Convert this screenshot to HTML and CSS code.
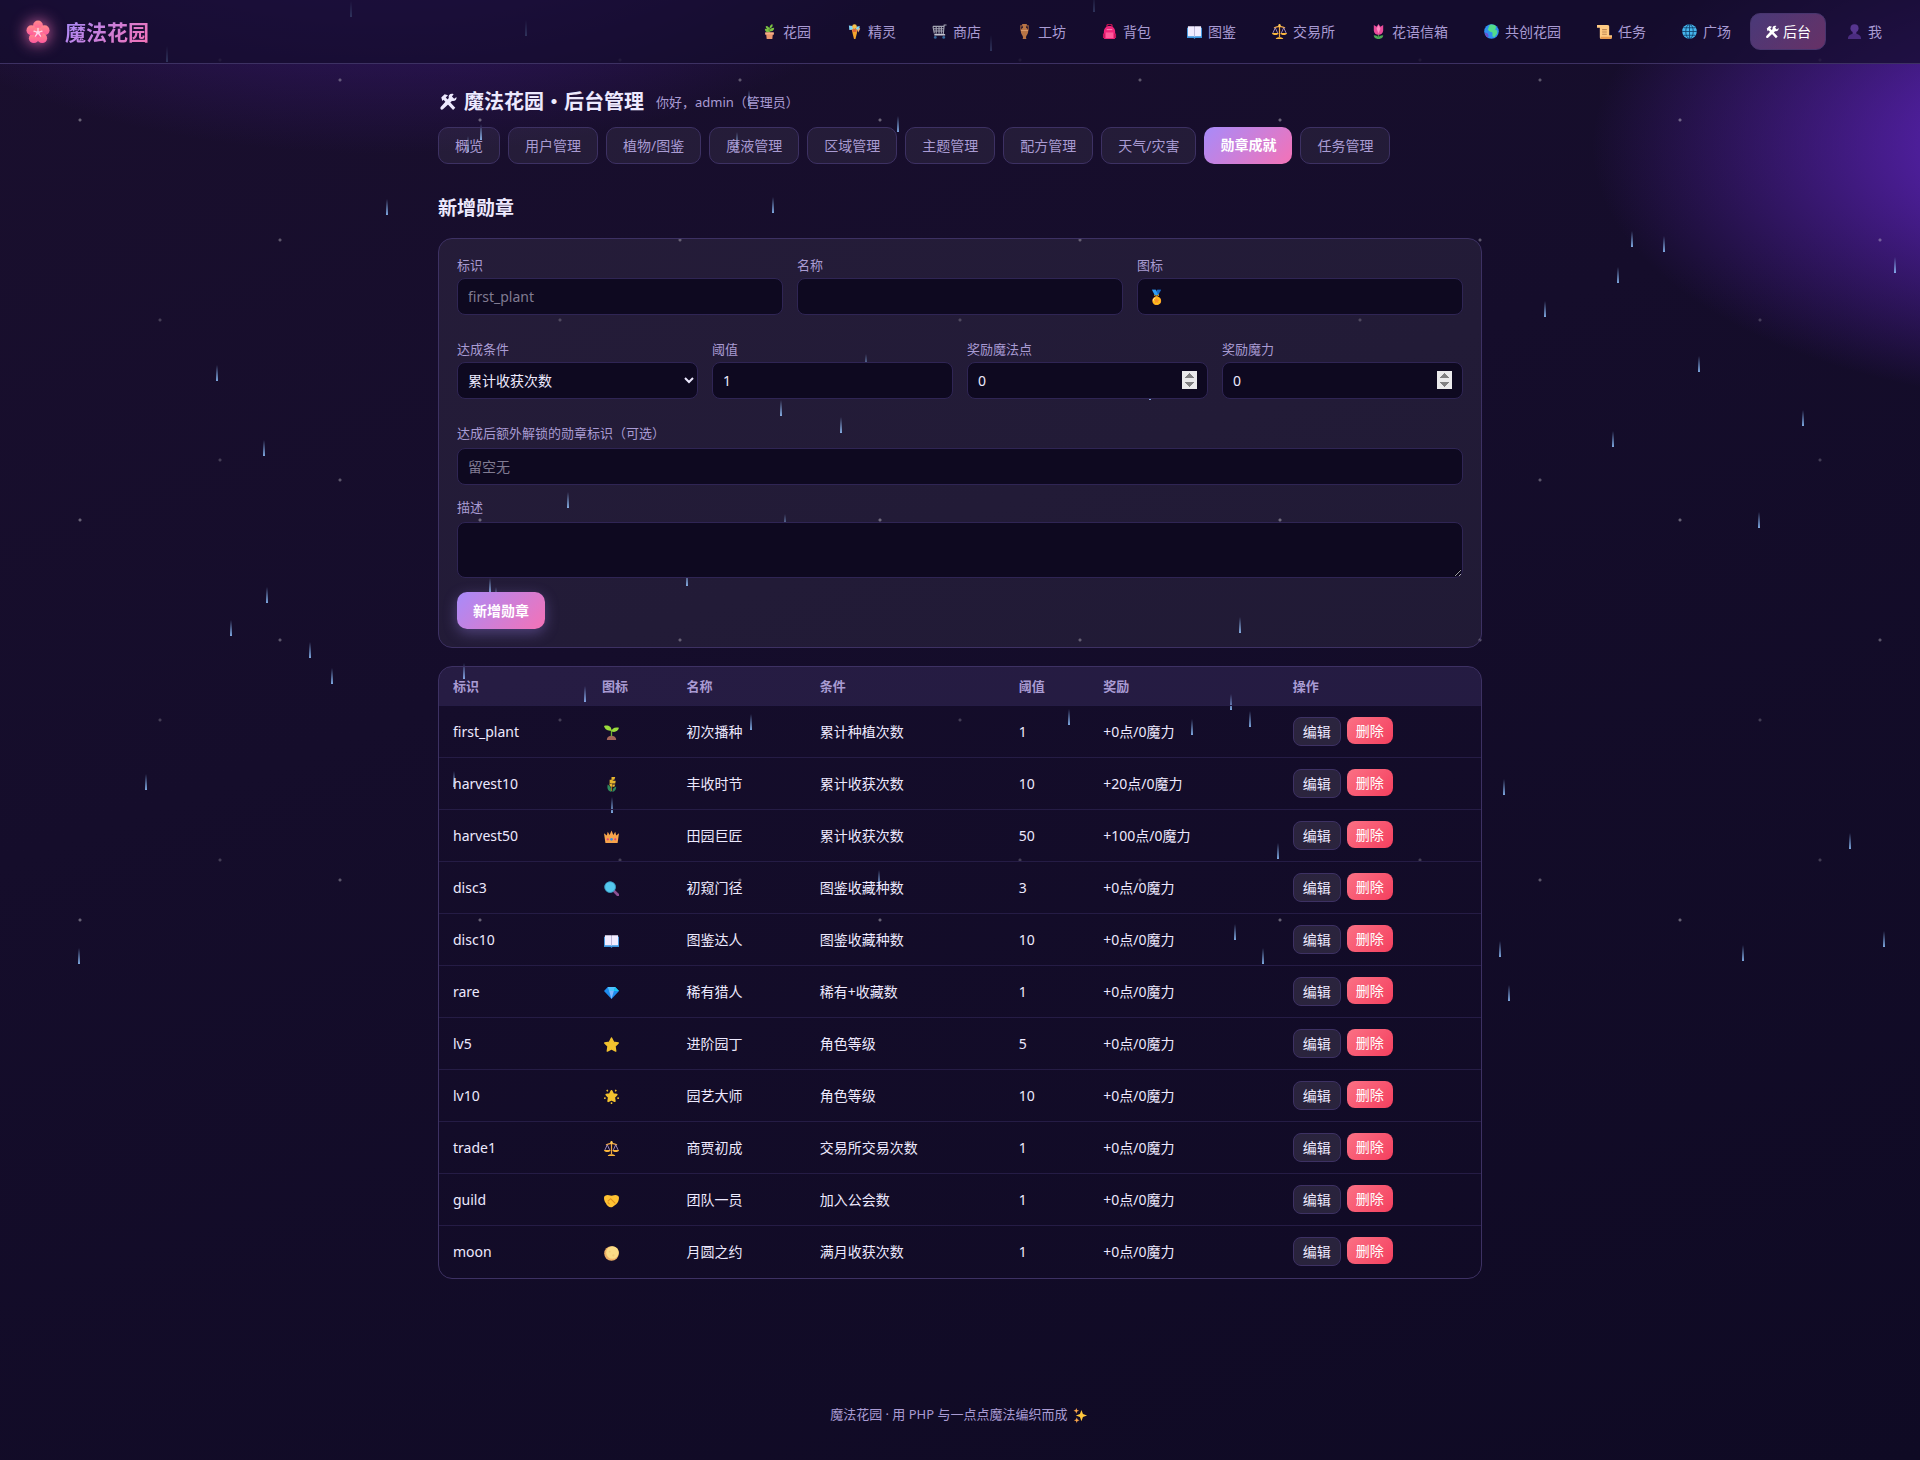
FILE: index.html
```html
<!DOCTYPE html>
<html lang="zh-CN">
<head>
  <meta charset="UTF-8">
  <meta name="viewport" content="width=device-width, initial-scale=1.0">
  <title>勋章成就 - 魔法花园后台</title>
  <link rel="stylesheet" href="styles.css">
</head>
<body>

  <!-- 图标 -->
  <svg class="sprite" aria-hidden="true">
    <defs>
      <linearGradient id="dropFill" x1="0" y1="0" x2="0" y2="1">
        <stop offset="0" stop-color="#8fc2ff" stop-opacity="0"/>
        <stop offset="1" stop-color="#8fc2ff" stop-opacity=".85"/>
      </linearGradient>
      <linearGradient id="petalFill" x1="0" y1="0" x2="0" y2="1">
        <stop offset="0" stop-color="#ff8a8a"/>
        <stop offset="1" stop-color="#ff5a9e"/>
      </linearGradient>
      <rect id="drop" width="2" height="16" fill="url(#dropFill)"/>
    </defs>
    <symbol id="i-blossom" viewBox="0 0 24 24">
      <g fill="url(#petalFill)">
        <circle cx="12" cy="5.4" r="4.9"/><circle cx="18.6" cy="10.2" r="4.9"/><circle cx="16.2" cy="18.2" r="4.9"/>
        <circle cx="7.8" cy="18.2" r="4.9"/><circle cx="5.4" cy="10.2" r="4.9"/><circle cx="12" cy="12.5" r="5"/>
      </g>
      <path d="M12 12.5V8.3M12 12.5l4-1.3M12 12.5l2.6 3.6M12 12.5l-2.6 3.6M12 12.5l-4-1.3" stroke="#ffd6ea" stroke-width="1.3" stroke-linecap="round"/>
      <circle cx="12" cy="12.5" r="1.8" fill="#ffd6ea"/>
    </symbol>
    <symbol id="i-pot" viewBox="0 0 16 16">
      <path d="M8 10V4" stroke="#4d8a2b" stroke-width="1.2"/>
      <path d="M8 6C5 6 4 4 4 2c3 0 4 2 4 4zM8 5c0-3 1-4 3-5 1 2 0 4-3 5zM8 9C5 9 3 8 3 5c3 0 5 1 5 4zM8 8c0-3 2-4 5-4 0 3-2 4-5 4z" fill="#7ac142"/>
      <path d="M3.5 9h9v2.5h-1L11 16H5l-.5-4.5h-1z" fill="#e8956d"/><path d="M3.5 9h9v2h-9z" fill="#f5ad88"/>
    </symbol>
    <symbol id="i-fairy" viewBox="0 0 16 16">
      <path d="M7.500 6L2.500 6.500 2 1.500 6 2zM9 6l4 1 .5-5L10 3z" fill="#7fd3f7"/>
      <circle cx="8" cy="2.800" r="2.500" fill="#f7c04a"/>
      <path d="M5 5.500h6L10.500 10 9 16H7.500L6 10z" fill="#f4a52c"/><path d="M6 5.500h4v3H6z" fill="#e0653c"/>
      <path d="M11 7l2.500-3 .5 1-2 4z" fill="#f6b26b"/>
    </symbol>
    <symbol id="i-cart" viewBox="0 0 16 16">
      <path d="M15.500 1H13l-1 10H3M1 2.500h11.500M1.500 5h11M2 7.500h10M1 2.500L2.500 10M4.500 2.500V10M7.500 2.500V10M10 2.500V10" fill="none" stroke="#a3a4b2" stroke-width="1.200"/>
      <path d="M2.500 11.500H14" stroke="#c8c8d4" stroke-width="1.500"/><circle cx="3.500" cy="14.300" r="1.500" fill="#35689b"/><circle cx="12.500" cy="14.300" r="1.500" fill="#35689b"/>
    </symbol>
    <symbol id="i-vase" viewBox="0 0 16 16">
      <path d="M6 2H4v5M10 2h2v5" fill="none" stroke="#9c5f3c" stroke-width="1.1"/>
      <path d="M5.500 0h5v1.500L9.500 3c0 1.500 2.500 2 2.500 4.500 0 3-2 4.500-2.500 6.500l.5 2H6l.5-2C6 12 4 10.500 4 7.500 4 5 6.500 4.500 6.500 3l-1-1.500z" fill="#b87445"/>
      <path d="M4.200 7h7.600" stroke="#e0a070"/>
    </symbol>
    <symbol id="i-bag" viewBox="0 0 16 16">
      <path d="M5 3c0-4 6-4 6 0" fill="none" stroke="#b3134f" stroke-width="1.4"/>
      <path d="M2 8c0-4 3-6 6-6s6 2 6 6v7a1 1 0 0 1-1 1H3a1 1 0 0 1-1-1z" fill="#f0257a"/>
      <path d="M4 9h8v6H4z" fill="#ff5a9b"/><path d="M1 10h2v5H1zM13 10h2v5h-2z" fill="#c4155d"/><path d="M5 6h6" stroke="#ff8fbd"/>
    </symbol>
    <symbol id="i-book" viewBox="0 0 16 16">
      <path d="M0 4h16v11H9l-1 1-1-1H0z" fill="#3b94dc"/><path d="M1 2.500h6.500L8 3l.5-.5H15V13H8.500l-.5.5-.5-.5H1z" fill="#f1ecff"/><path d="M8 3v10" stroke="#b9b3d6"/>
    </symbol>
    <symbol id="i-scale" viewBox="0 0 16 16">
      <path d="M8 0v14M2 4c2 0 3-1.500 6-1.500S12 4 14 4" fill="none" stroke="#f0a742" stroke-width="1.300"/>
      <path d="M3.500 4L1 9.500M3.500 4L6 9.500M12.500 4L10 9.500M12.500 4L15 9.500" stroke="#b39bd0" stroke-width=".9"/>
      <path d="M0 9.500h7c0 3-7 3-7 0zM9 9.500h7c0 3-7 3-7 0zM4 16c0-2.500 8-2.500 8 0z" fill="#f9b63c"/><circle cx="8" cy="1.500" r="1.300" fill="#ffcf5a"/>
    </symbol>
    <symbol id="i-tulip" viewBox="0 0 16 16">
      <path d="M8 8v8" stroke="#3d9447" stroke-width="1.500"/><path d="M8 16c-2 0-5-1-5-4 3 0 5 1 5 4 0-3 2-4 5-4 0 3-3 4-5 4z" fill="#4caa55"/>
      <path d="M3 1l3 2 2-3 2 3 3-2v6c0 6-10 6-10 0z" fill="#ea4b9b"/><path d="M8 1l2 4-2 5-2-5z" fill="#ff8cc2"/>
    </symbol>
    <symbol id="i-earth" viewBox="0 0 16 16">
      <circle cx="8" cy="8" r="7.800" fill="#2f8ff0"/><path d="M6 1c3-1 6 0 7 2l-1 3 2 1v3l-3 4-2-1V9L6 8 4 6z" fill="#52dd8b"/><path d="M1 9l3 1 1 3-1 1.500C2 13 1 11 1 9z" fill="#6a4fd0"/>
    </symbol>
    <symbol id="i-scroll" viewBox="0 0 16 16">
      <path d="M0 1h11c2 0 2 1 2 2v9h3v2c0 1-1 2-2 2H5c-1.500 0-2-1-2-2V4H0z" fill="#ffcb84"/>
      <path d="M5.500 6h5M5.500 8.500h5M5.500 11h5" stroke="#c08650" stroke-width="1.100"/><path d="M4 13.500h12V14c0 1-1 2-2 2H5c-1 0-1.500-1-1-2.500z" fill="#e89c50"/>
    </symbol>
    <symbol id="i-globe" viewBox="0 0 16 16">
      <circle cx="8" cy="8" r="7.800" fill="#45b5ec"/><g fill="none" stroke="#12426e" stroke-width=".9"><ellipse cx="8" cy="8" rx="4" ry="7.500"/><path d="M8 0v16M0 8h16M2 4h12M2 12h12"/></g>
    </symbol>
    <symbol id="i-tools" viewBox="0 0 16 16">
      <path d="M2 4l3-3 3 1-2 2 8.500 9-2 2L4 6 3 7z" fill="currentColor"/>
      <path d="M15.500 3.500L13.500 5 11.500 3 13 1c-3-1-5 1-4.300 3.500L1.500 12.500c-1 2 1 3 2 2l8-7.500c2.500.7 4.500-1 4-3.500z" fill="currentColor"/>
    </symbol>
    <symbol id="i-user" viewBox="0 0 16 16">
      <circle cx="8" cy="4.500" r="4.300" fill="#56358f"/><path d="M6 8h4v3H6z" fill="#56358f"/><path d="M1 16c0-4 3-5.500 7-5.500s7 1.500 7 5.500z" fill="#4a2c80"/>
    </symbol>
    <symbol id="i-sprout" viewBox="0 0 16 16">
      <path d="M3 16c0-6 10-6 10 0z" fill="#a5665a"/><path d="M8 12V5" stroke="#6fae33" stroke-width="1.400"/>
      <path d="M8 6C4 6 1 5 0 1c4-1 8 0 8 5zM8 7c0-3 3-5 8-4-1 4-4 5-8 4z" fill="#9bdc3c"/>
    </symbol>
    <symbol id="i-rice" viewBox="0 0 16 16">
      <path d="M8 16c-4-1-5-4-4-8 3 2 4 4 4 8zM9 16c0-3 1-5 4-6 0 3-1 5-4 6z" fill="#2f8a5b"/>
      <path d="M8 15c0-5 0-8 1.500-12" fill="none" stroke="#a07a22" stroke-width="1.200"/>
      <path d="M8 0h4l-1 3H8zM6 3h3v3.500H6zM9 4h3.500L12 7H9zM5.500 7h3v3h-2zM9 8h3l-1 2.500H9z" fill="#e7b52e"/>
    </symbol>
    <symbol id="i-crown" viewBox="0 0 16 16">
      <path d="M0 4.500L3 7l1-4 2 3.500L8 1.500l2 5L12 3l1 4 3-2.500L14.500 15h-13z" fill="#f7a34b"/><circle cx="8" cy="11" r="1.400" fill="#3c8ae0"/><circle cx="4" cy="11" r="1.200" fill="#e6447c"/><circle cx="12" cy="11" r="1.200" fill="#e6447c"/>
    </symbol>
    <symbol id="i-lens" viewBox="0 0 16 16">
      <path d="M10 10l5 5" stroke="#8d4f92" stroke-width="3" stroke-linecap="round"/><circle cx="6.500" cy="6.500" r="6" fill="#55c8ee"/><circle cx="6.500" cy="6.500" r="5.700" fill="none" stroke="#3595bd" stroke-width=".8"/>
    </symbol>
    <symbol id="i-gem" viewBox="0 0 16 16">
      <path d="M4 2h8l4 4.500L8 15 0 6.500z" fill="#1e8df0"/><path d="M4 2h8l-1.500 4.500h-5z" fill="#4fc3ff"/><path d="M5.500 6.500h5L8 15z" fill="#7fb8ff"/><path d="M12 2l4 4.500h-5.500z" fill="#19c8f0"/>
    </symbol>
    <symbol id="i-star" viewBox="0 0 16 16">
      <path d="M8 1l2.200 4.500 5 .8-3.500 3.500.8 5.200L8 12.700 3.500 15l.8-5.200L.8 6.300l5-.8z" fill="#f2c22f" stroke="#f2c22f" stroke-width="1.500" stroke-linejoin="round"/>
    </symbol>
    <symbol id="i-glow" viewBox="0 0 16 16">
      <path d="M8 2l1.800 3.500 3.700.6-2.700 2.800.7 4L8 11.300 4.500 13l.7-4.100-2.700-2.800 3.700-.6z" fill="#f2c22f" stroke="#f2c22f" stroke-width="2" stroke-linejoin="round"/>
      <path d="M3 1l1 1.500M13 1l-1 1.500M0 10l1.800-.5M16 10l-1.800-.5M8 14v2" stroke="#f2c22f" stroke-width="1.600"/>
    </symbol>
    <symbol id="i-hands" viewBox="0 0 16 16">
      <path d="M0 5c0-2 2-3 4-3l4 1 4-1c2 0 4 1 4 3-.2 3-1 5-3 7l-4 3c-3 1-6-1-7-4C.5 9 0 7 0 5z" fill="#ffc233"/><path d="M4 9l3-3 5 5M6 12l-2-2" fill="none" stroke="#e08e1d" stroke-width="1.100"/>
    </symbol>
    <symbol id="i-moon" viewBox="0 0 16 16">
      <circle cx="8" cy="8" r="7.800" fill="#eeb066"/><circle cx="9" cy="7" r="6.700" fill="#fbdc86"/><circle cx="6" cy="6" r="1" fill="#f3cb78"/><circle cx="10" cy="10" r="1.200" fill="#f3cb78"/>
    </symbol>
    <symbol id="i-spark" viewBox="0 0 16 16">
      <path d="M9 2l1.600 4.400L15 8l-4.400 1.600L9 14l-1.600-4.400L3 8l4.400-1.600z" fill="#ffc83d"/><path d="M3.500 0l.8 2.200 2.200.8-2.200.8-.8 2.200-.8-2.200L.5 3l2.200-.8zM4 10l.8 2.200 2.200.8-2.200.8L4 16l-.8-2.200L1 13l2.200-.8z" fill="#ffa94d"/>
    </symbol>
  </svg>

  <!-- 天气：星星与雨 -->
  <div class="sky" aria-hidden="true">
    <svg class="rain">
      <use href="#drop" x="350" y="1"/><use href="#drop" x="166" y="46"/><use href="#drop" x="525" y="20"/>
      <use href="#drop" x="1093" y="-4"/><use href="#drop" x="990" y="35"/><use href="#drop" x="386" y="199"/>
      <use href="#drop" x="748" y="90"/><use href="#drop" x="897" y="116"/><use href="#drop" x="480" y="124"/>
      <use href="#drop" x="467" y="136"/><use href="#drop" x="736" y="132"/><use href="#drop" x="772" y="197"/>
      <use href="#drop" x="865" y="354"/><use href="#drop" x="780" y="400"/><use href="#drop" x="840" y="417"/>
      <use href="#drop" x="567" y="492"/><use href="#drop" x="784" y="514"/><use href="#drop" x="686" y="570"/>
      <use href="#drop" x="489" y="578"/><use href="#drop" x="495" y="587"/><use href="#drop" x="1149" y="384"/>
      <use href="#drop" x="1239" y="617"/><use href="#drop" x="463" y="663"/><use href="#drop" x="584" y="686"/>
      <use href="#drop" x="750" y="714"/><use href="#drop" x="453" y="771"/><use href="#drop" x="611" y="797"/>
      <use href="#drop" x="878" y="870"/><use href="#drop" x="1068" y="709"/><use href="#drop" x="1230" y="694"/>
      <use href="#drop" x="1191" y="719"/><use href="#drop" x="1249" y="711"/><use href="#drop" x="1277" y="843"/>
      <use href="#drop" x="1234" y="924"/><use href="#drop" x="1262" y="948"/><use href="#drop" x="1631" y="231"/>
      <use href="#drop" x="1663" y="236"/><use href="#drop" x="1617" y="267"/><use href="#drop" x="1544" y="301"/>
      <use href="#drop" x="1894" y="257"/><use href="#drop" x="1698" y="356"/><use href="#drop" x="1802" y="410"/>
      <use href="#drop" x="1612" y="431"/><use href="#drop" x="1758" y="512"/><use href="#drop" x="216" y="365"/>
      <use href="#drop" x="263" y="440"/><use href="#drop" x="266" y="587"/><use href="#drop" x="230" y="620"/>
      <use href="#drop" x="309" y="642"/><use href="#drop" x="331" y="668"/><use href="#drop" x="145" y="774"/>
      <use href="#drop" x="78" y="948"/><use href="#drop" x="1503" y="779"/><use href="#drop" x="1849" y="833"/>
      <use href="#drop" x="1499" y="941"/><use href="#drop" x="1508" y="985"/><use href="#drop" x="1742" y="945"/>
      <use href="#drop" x="1883" y="931"/>
    </svg>
  </div>

  <header class="topbar">
    <a class="brand" href="#">
      <svg class="brand-icon"><use href="#i-blossom"/></svg>
      <span class="brand-name">魔法花园</span>
    </a>
    <nav class="nav">
      <a href="#"><svg class="icon"><use href="#i-pot"/></svg>花园</a>
      <a href="#"><svg class="icon"><use href="#i-fairy"/></svg>精灵</a>
      <a href="#"><svg class="icon"><use href="#i-cart"/></svg>商店</a>
      <a href="#"><svg class="icon"><use href="#i-vase"/></svg>工坊</a>
      <a href="#"><svg class="icon"><use href="#i-bag"/></svg>背包</a>
      <a href="#"><svg class="icon"><use href="#i-book"/></svg>图鉴</a>
      <a href="#"><svg class="icon"><use href="#i-scale"/></svg>交易所</a>
      <a href="#"><svg class="icon"><use href="#i-tulip"/></svg>花语信箱</a>
      <a href="#"><svg class="icon"><use href="#i-earth"/></svg>共创花园</a>
      <a href="#"><svg class="icon"><use href="#i-scroll"/></svg>任务</a>
      <a href="#"><svg class="icon"><use href="#i-globe"/></svg>广场</a>
      <a href="#" class="active"><svg class="icon-mono"><use href="#i-tools"/></svg>后台</a>
      <a href="#"><svg class="icon"><use href="#i-user"/></svg>我</a>
    </nav>
  </header>

  <main class="container">
    <div class="page-head">
      <h1><svg class="head-icon"><use href="#i-tools"/></svg>魔法花园・后台管理</h1>
      <span class="hello">你好，admin（管理员）</span>
    </div>

    <nav class="tabs">
      <a href="#">概览</a>
      <a href="#">用户管理</a>
      <a href="#">植物/图鉴</a>
      <a href="#">魔液管理</a>
      <a href="#">区域管理</a>
      <a href="#">主题管理</a>
      <a href="#">配方管理</a>
      <a href="#">天气/灾害</a>
      <a href="#" class="active">勋章成就</a>
      <a href="#">任务管理</a>
    </nav>

    <h2>新增勋章</h2>
    <form class="card">
      <div class="grid grid-3">
        <div class="field">
          <label for="code">标识</label>
          <input type="text" id="code" placeholder="first_plant">
        </div>
        <div class="field">
          <label for="name">名称</label>
          <input type="text" id="name">
        </div>
        <div class="field">
          <label for="icon">图标</label>
          <input type="text" id="icon" value="🏅">
        </div>
      </div>
      <div class="grid grid-4">
        <div class="field">
          <label for="cond">达成条件</label>
          <select id="cond">
            <option>累计收获次数</option>
            <option>累计种植次数</option>
            <option>图鉴收藏种数</option>
            <option>角色等级</option>
          </select>
        </div>
        <div class="field">
          <label for="threshold">阈值</label>
          <input type="number" id="threshold" value="1">
        </div>
        <div class="field">
          <label for="points">奖励魔法点</label>
          <input type="number" class="spin" id="points" value="0">
        </div>
        <div class="field">
          <label for="mana">奖励魔力</label>
          <input type="number" class="spin" id="mana" value="0">
        </div>
      </div>
      <div class="field wide">
        <label for="unlock">达成后额外解锁的勋章标识（可选）</label>
        <input type="text" id="unlock" placeholder="留空无">
      </div>
      <div class="field wide">
        <label for="desc">描述</label>
        <textarea id="desc"></textarea>
      </div>
      <button type="submit" class="btn">新增勋章</button>
    </form>

    <div class="table-wrap">
      <table>
        <colgroup>
          <col class="c-code"><col class="c-icon"><col class="c-name"><col class="c-cond"><col class="c-num"><col class="c-gift"><col class="c-op">
        </colgroup>
        <thead>
          <tr><th>标识</th><th>图标</th><th>名称</th><th>条件</th><th>阈值</th><th>奖励</th><th>操作</th></tr>
        </thead>
        <tbody>
          <tr>
            <td>first_plant</td><td><svg class="icon"><use href="#i-sprout"/></svg></td><td>初次播种</td><td>累计种植次数</td><td>1</td><td>+0点/0魔力</td>
            <td><div class="ops"><button class="btn-edit">编辑</button><button class="btn-del">删除</button></div></td>
          </tr>
          <tr>
            <td>harvest10</td><td><svg class="icon"><use href="#i-rice"/></svg></td><td>丰收时节</td><td>累计收获次数</td><td>10</td><td>+20点/0魔力</td>
            <td><div class="ops"><button class="btn-edit">编辑</button><button class="btn-del">删除</button></div></td>
          </tr>
          <tr>
            <td>harvest50</td><td><svg class="icon"><use href="#i-crown"/></svg></td><td>田园巨匠</td><td>累计收获次数</td><td>50</td><td>+100点/0魔力</td>
            <td><div class="ops"><button class="btn-edit">编辑</button><button class="btn-del">删除</button></div></td>
          </tr>
          <tr>
            <td>disc3</td><td><svg class="icon"><use href="#i-lens"/></svg></td><td>初窥门径</td><td>图鉴收藏种数</td><td>3</td><td>+0点/0魔力</td>
            <td><div class="ops"><button class="btn-edit">编辑</button><button class="btn-del">删除</button></div></td>
          </tr>
          <tr>
            <td>disc10</td><td><svg class="icon"><use href="#i-book"/></svg></td><td>图鉴达人</td><td>图鉴收藏种数</td><td>10</td><td>+0点/0魔力</td>
            <td><div class="ops"><button class="btn-edit">编辑</button><button class="btn-del">删除</button></div></td>
          </tr>
          <tr>
            <td>rare</td><td><svg class="icon"><use href="#i-gem"/></svg></td><td>稀有猎人</td><td>稀有+收藏数</td><td>1</td><td>+0点/0魔力</td>
            <td><div class="ops"><button class="btn-edit">编辑</button><button class="btn-del">删除</button></div></td>
          </tr>
          <tr>
            <td>lv5</td><td><svg class="icon"><use href="#i-star"/></svg></td><td>进阶园丁</td><td>角色等级</td><td>5</td><td>+0点/0魔力</td>
            <td><div class="ops"><button class="btn-edit">编辑</button><button class="btn-del">删除</button></div></td>
          </tr>
          <tr>
            <td>lv10</td><td><svg class="icon"><use href="#i-glow"/></svg></td><td>园艺大师</td><td>角色等级</td><td>10</td><td>+0点/0魔力</td>
            <td><div class="ops"><button class="btn-edit">编辑</button><button class="btn-del">删除</button></div></td>
          </tr>
          <tr>
            <td>trade1</td><td><svg class="icon"><use href="#i-scale"/></svg></td><td>商贾初成</td><td>交易所交易次数</td><td>1</td><td>+0点/0魔力</td>
            <td><div class="ops"><button class="btn-edit">编辑</button><button class="btn-del">删除</button></div></td>
          </tr>
          <tr>
            <td>guild</td><td><svg class="icon"><use href="#i-hands"/></svg></td><td>团队一员</td><td>加入公会数</td><td>1</td><td>+0点/0魔力</td>
            <td><div class="ops"><button class="btn-edit">编辑</button><button class="btn-del">删除</button></div></td>
          </tr>
          <tr>
            <td>moon</td><td><svg class="icon"><use href="#i-moon"/></svg></td><td>月圆之约</td><td>满月收获次数</td><td>1</td><td>+0点/0魔力</td>
            <td><div class="ops"><button class="btn-edit">编辑</button><button class="btn-del">删除</button></div></td>
          </tr>
        </tbody>
      </table>
    </div>
  </main>

  <footer class="footer">魔法花园 · 用 PHP 与一点点魔法编织而成 <svg class="icon"><use href="#i-spark"/></svg></footer>

</body>
</html>
```
FILE: styles.css
```css
:root {
  --text: #ede9fe;
  --muted: #a99bd3;
  --line: #3d3163;
  --input: #0e0920;
  --grad: linear-gradient(135deg, #a78bfa, #f472b6);
}

* {
  box-sizing: border-box;
}

body {
  margin: 0;
  min-height: 100vh;
  font-family: "Noto Sans", "Noto Sans CJK SC", sans-serif;
  font-size: 14px;
  line-height: 20px;
  color: var(--text);
  background:
    radial-gradient(1200px 600px at 20% -10%, #451c8c, transparent 50%),
    radial-gradient(1000px 500px at 110% 10%, #6d28d9, transparent 52%),
    linear-gradient(160deg, #1a0f2e, #150d2b 40%, #0f0a24);
  background-color: #0f0a24;
}

a {
  color: inherit;
  text-decoration: none;
}

.sprite {
  position: absolute;
  width: 0;
  height: 0;
}

/* 星空和雨滴在内容下面 */
.sky {
  position: absolute;
  top: 0;
  left: 0;
  width: 100%;
  height: 1001px;
  z-index: -1;
  overflow: hidden;
  background-image:
    radial-gradient(circle at 80px 120px, rgba(255, 255, 255, .35) 1px, transparent 2px),
    radial-gradient(circle at 340px 80px, rgba(255, 255, 255, .3) 1px, transparent 2px),
    radial-gradient(circle at 280px 240px, rgba(255, 255, 255, .3) 1px, transparent 2px),
    radial-gradient(circle at 160px 320px, rgba(255, 255, 255, .2) 1px, transparent 2px),
    radial-gradient(circle at 220px 60px, rgba(255, 255, 255, .2) 1px, transparent 2px);
  background-size: 400px 400px;
}

.rain {
  display: block;
  width: 100%;
  height: 100%;
}

.icon {
  width: 15px;
  height: 15px;
  margin: 0 2px;
  flex: none;
  vertical-align: middle;
}

/* 顶部导航 */
.topbar {
  position: sticky;
  top: 0;
  z-index: 10;
  display: flex;
  align-items: center;
  justify-content: space-between;
  padding: 13px 23px 13px 24px;
  background: rgba(20, 12, 45, .75);
  border-bottom: 1px solid var(--line);
}

.brand {
  display: flex;
  align-items: center;
  gap: 13px;
}

.brand-icon {
  width: 28px;
  height: 24px;
  filter: drop-shadow(0 0 8px #f472b6);
}

.brand-name {
  font-size: 21px;
  line-height: 24px;
  font-weight: 700;
  background: var(--grad);
  -webkit-background-clip: text;
  background-clip: text;
  color: transparent;
}

.nav {
  display: flex;
  gap: 4px;
}

.nav a {
  display: flex;
  align-items: center;
  gap: 4px;
  padding: 8px 14px;
  line-height: 19px;
  border: 1px solid transparent;
  border-radius: 10px;
  color: var(--muted);
}

.nav a.active {
  color: #fff;
  border-color: #48356e;
  background: linear-gradient(135deg, rgba(167, 139, 250, .35), rgba(244, 114, 182, .35));
}

.icon-mono {
  width: 14px;
  height: 14px;
}

.container {
  max-width: 1100px;
  margin: 0 auto;
  padding: 24px 28px 90px;
}

.page-head {
  display: flex;
  align-items: center;
  gap: 12px;
  margin-bottom: 11px;
}

h1 {
  display: flex;
  align-items: center;
  gap: 6px;
  margin: 0;
  font-size: 20px;
  line-height: 28px;
}

.head-icon {
  width: 20px;
  height: 18px;
}

.hello {
  font-size: 13px;
  color: var(--muted);
}

.tabs {
  display: flex;
  flex-wrap: wrap;
  gap: 8px;
}

.tabs a {
  padding: 8px 16px;
  line-height: 19px;
  color: var(--muted);
  background: rgba(255, 255, 255, .06);
  border: 1px solid var(--line);
  border-radius: 10px;
}

.tabs a.active {
  color: #fff;
  font-weight: 600;
  background: var(--grad);
  border: none;
}

h2 {
  margin: 30px 0 16px;
  font-size: 19px;
  line-height: 28px;
}

/* 表单 */
.card {
  padding: 18px;
  background: rgba(255, 255, 255, .06);
  border: 1px solid var(--line);
  border-radius: 14px;
}

.grid {
  display: grid;
  gap: 14px;
  margin-bottom: 26px;
}

.grid-3 {
  grid-template-columns: repeat(3, 1fr);
}

.grid-4 {
  grid-template-columns: repeat(4, 1fr);
}

.field {
  display: flex;
  flex-direction: column;
  gap: 5px;
}

.field.wide {
  gap: 7px;
  margin-bottom: 14px;
}

label {
  font-size: 13px;
  line-height: 16px;
  color: var(--muted);
}

input,
select,
textarea {
  width: 100%;
  height: 37px;
  padding: 8px 10px;
  font: inherit;
  color: var(--text);
  background: var(--input);
  border: 1px solid #2f2554;
  border-radius: 8px;
}

::placeholder {
  color: #807b92;
}

select {
  padding: 7px 6px 9px;
}

textarea {
  height: 56px;
}

input.spin::-webkit-inner-spin-button {
  opacity: .93;
}

button {
  font: inherit;
  color: #fff;
  border: none;
  border-radius: 8px;
  cursor: pointer;
}

.btn {
  display: block;
  padding: 8px 16px;
  line-height: 21px;
  font-weight: 700;
  border-radius: 10px;
  background: var(--grad);
  box-shadow: 0 4px 14px rgba(167, 139, 250, .35);
}

/* 勋章列表 */
.table-wrap {
  margin-top: 18px;
  border: 1px solid var(--line);
  border-radius: 14px;
  overflow: hidden;
}

table {
  width: 100%;
  table-layout: fixed;
  border-collapse: collapse;
}

.c-code { width: 14.3%; }
.c-icon { width: 8.1%; }
.c-name { width: 12.8%; }
.c-cond { width: 19.1%; }
.c-num { width: 8.1%; }
.c-gift { width: 18.2%; }
.c-op { width: 19.4%; }

th {
  padding: 10px 14px;
  font-size: 13px;
  line-height: 18px;
  text-align: left;
  color: var(--muted);
  background: rgba(167, 139, 250, .12);
}

td {
  height: 52px;
  padding: 0 14px;
  border-top: 1px solid #251c45;
}

.ops {
  display: flex;
  align-items: flex-start;
  gap: 6px;
}

.btn-edit {
  padding: 4px 9px;
  line-height: 19px;
  color: var(--text);
  background: rgba(255, 255, 255, .1);
  border: 1px solid var(--line);
}

.btn-del {
  padding: 4px 9px;
  line-height: 19px;
  background: linear-gradient(135deg, #fb7185, #f43f5e);
}

.footer {
  padding: 36px 20px;
  font-size: 13px;
  line-height: 18px;
  text-align: center;
  color: var(--muted);
}
```
